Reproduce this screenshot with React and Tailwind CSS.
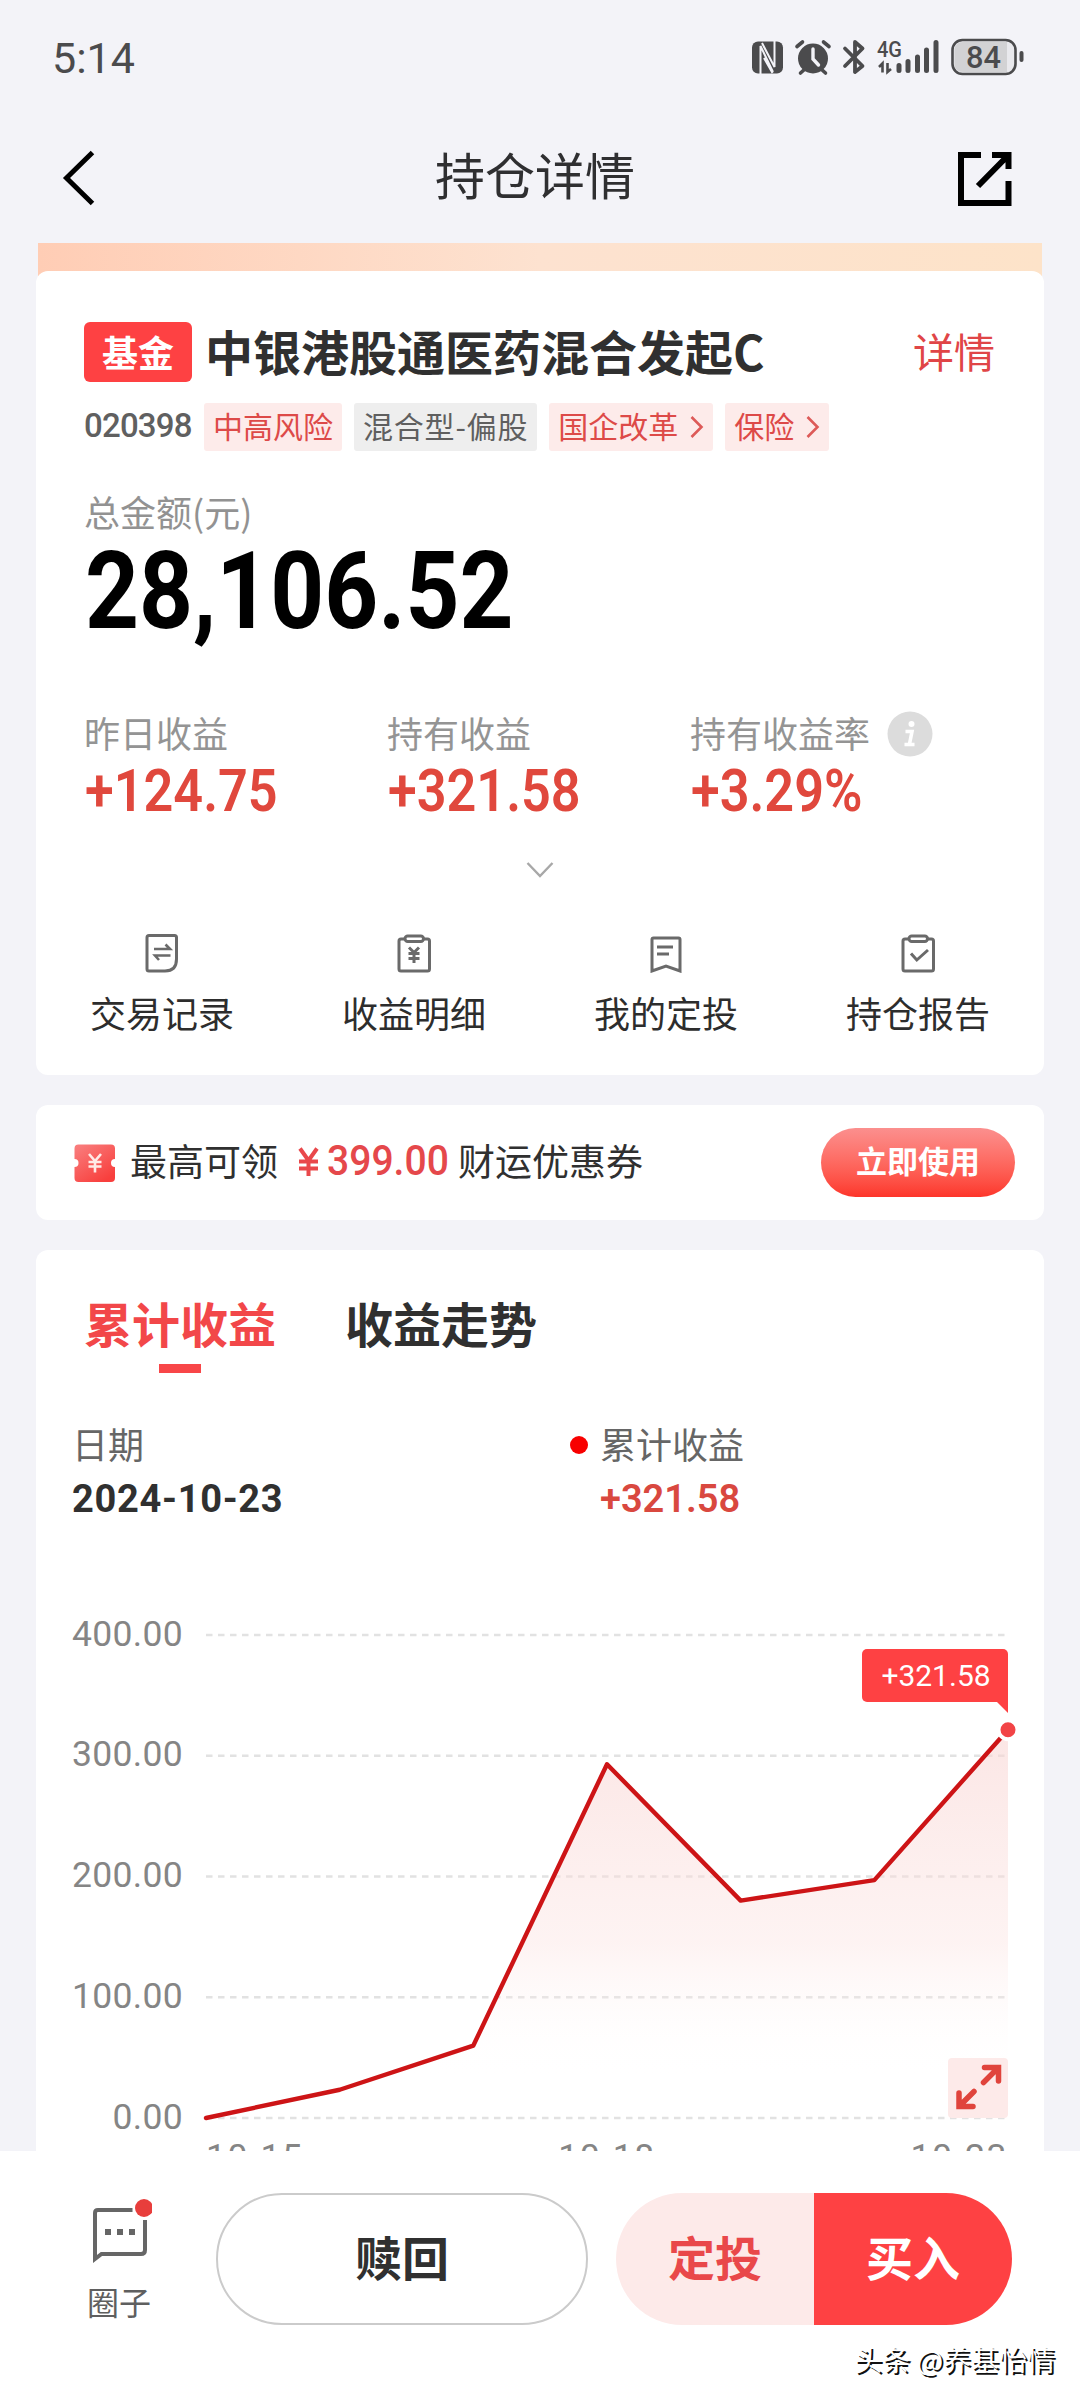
import { clsx } from "clsx";

const tags = [
  { label: "中高风险", tone: "red" },
  { label: "混合型-偏股", tone: "gray", wide: true },
  { label: "国企改革", tone: "red", link: true },
  { label: "保险", tone: "red", link: true },
];

const stats = [
  { label: "昨日收益", value: "+124.75" },
  { label: "持有收益", value: "+321.58" },
  { label: "持有收益率", value: "+3.29%", info: true },
];

const actions = [
  { icon: "record", label: "交易记录" },
  { icon: "income", label: "收益明细" },
  { icon: "plan", label: "我的定投" },
  { icon: "report", label: "持仓报告" },
];

const history = [0, 23.4, 60, 293, 180, 197, 321.58];
const yTicks = ["400.00", "300.00", "200.00", "100.00", "0.00"];

function StatusBar() {
  return (
    <div className="flex h-[112px] items-center justify-between pl-[52px] pr-[54px] pt-1 text-[#4b4b4d]">
      <span className="font-[Roboto] text-[43px] leading-none">5:14</span>
      <svg width="274" height="40" viewBox="0 0 274 40" fill="none" stroke="currentColor">
        {/* nfc */}
        <rect x="0" y="3.500" width="31" height="32" rx="6" fill="currentColor" stroke="none" />
        <path d="M8.500 36V8L21 34M22.500 3V29L10 5M12 20L20.500 35" stroke="#f3f3f8" strokeWidth="2" />
        {/* alarm */}
        <circle cx="61" cy="20.500" r="15" fill="currentColor" stroke="none" />
        <path d="M45 8.500L50.500 4M77 8.500L71.500 4M48.500 35L53.500 30.500M73.500 35L68.500 30.500" strokeWidth="3.600" strokeLinecap="round" />
        <path d="M61 11V21L66.500 27" stroke="#f3f3f8" strokeWidth="3.400" strokeLinecap="round" />
        {/* bluetooth */}
        <path d="M93 10.500L110.500 28L103 34V4L110.500 10.500L93 28" strokeWidth="3.800" strokeLinecap="round" strokeLinejoin="round" />
        {/* signal */}
        <path d="M130.500 34.500V25.500L127 29M135.500 25V34L139 31" strokeWidth="2.600" />
        <path d="M147 27.500V32.500M156 23.500V32.500M165.500 19V32.500M174.500 12V32.500M184 4.500V32.500" strokeWidth="5" strokeLinecap="round" />
        <text x="125" y="18.500" fill="currentColor" stroke="none" fontFamily="Roboto" fontSize="22" fontWeight="500" textLength="25" lengthAdjust="spacingAndGlyphs">4G</text>
        {/* battery */}
        <rect x="200.500" y="2" width="63" height="34" rx="10" fill="#e9e9ed" strokeWidth="2.600" />
        <path d="M211 4H255V34H211C206 34 202.500 31 202.500 26V12C202.500 7 206 4 211 4Z" fill="#d2d2d4" stroke="none" />
        <text x="214" y="30" fill="currentColor" stroke="none" fontFamily="Roboto" fontSize="31" fontWeight="500" textLength="35" lengthAdjust="spacingAndGlyphs">84</text>
        <path d="M269.500 15V22" strokeWidth="4" strokeLinecap="round" />
      </svg>
    </div>
  );
}

function NavBar() {
  return (
    <div className="flex h-[131px] items-center justify-between pl-[60px] pr-[67px]">
      <svg width="38" height="56" viewBox="0 0 38 56" fill="none" stroke="#000" strokeWidth="5">
        <path d="M32.500 2.500L6.500 28L32.500 53.500" />
      </svg>
      <h1 className="ml-[15px] pb-[10px] text-[50px] leading-none text-[#2f2f31]">持仓详情</h1>
      <svg width="56" height="58" viewBox="0 0 56 58" fill="none" stroke="#000" strokeWidth="6">
        <path d="M24 6H4V54H51.500V32" />
        <path d="M35 6H51.500V20M51.500 6L21 37" />
      </svg>
    </div>
  );
}

function Chevron() {
  return (
    <svg width="14" height="24" viewBox="0 0 14 24" fill="none" stroke="#dd5a58" strokeWidth="2.600" className="ml-[12px] mt-[3px]">
      <path d="M1.500 2L11.500 12L1.500 22" />
    </svg>
  );
}

function ActionIcon({ name }) {
  return (
    <svg width="36" height="40" viewBox="0 0 36 40" fill="none" stroke="#6a6a6a" strokeWidth="3">
      {name === "record" && (
        <>
          <path d="M5 2.500H30.500Q32.500 2.500 32.500 4.500V26Q32.500 38 21 38H5Q3 38 3 36V4.500Q3 2.500 5 2.500Z" />
          <path d="M10 16H26L21.500 11.500M26.500 22.500H11L15 27" strokeWidth="2.600" />
        </>
      )}
      {(name === "income" || name === "report") && (
        <>
          <path d="M9 6H5Q3 6 3 8V36Q3 38 5 38H31.500Q33.500 38 33.500 36V8Q33.500 6 31.500 6H27.500" />
          <rect x="9" y="3" width="18.500" height="5.500" rx="2.700" />
        </>
      )}
      {name === "income" && <path d="M13 14.500L18 19.500L23 14.500M12.500 20.500H23.500M12.500 25.500H23.500M18 19.500V30" />}
      {name === "report" && <path d="M11 20.500L16.800 27L28 17" />}
      {name === "plan" && (
        <>
          <path d="M5.500 5H30.500Q32 5 32 6.500V38L18 33L4 38V6.500Q4 5 5.500 5Z" />
          <path d="M9 14H25M9 21H21" />
        </>
      )}
    </svg>
  );
}

function FundCard() {
  return (
    <section className="mt-[28px] h-[804px] rounded-xl bg-white pt-[51px]">
      <div className="flex h-[60px] items-center pl-12 pr-[49px]">
        <span className="flex h-[60px] w-[108px] items-center justify-center rounded-md bg-[#fe4143] pb-[3px] text-[36px] leading-none font-bold text-white">基金</span>
        <h2 className="ml-[13px] pb-[5px] text-[48px] leading-none font-bold whitespace-nowrap text-[#303030]">中银港股通医药混合发起C</h2>
        <a className="ml-auto pb-[4px] text-[41px] leading-none text-[#e04547]">详情</a>
      </div>

      <div className="mt-[21px] flex h-12 items-center gap-3 pl-12 text-[30px] leading-none">
        <span className="w-[108px] pb-[4px] font-[Roboto] text-[33px] font-medium tracking-[-0.8px] text-[#606060]">020398</span>
        {tags.map((tag) => (
          <span
            key={tag.label}
            className={clsx(
              "flex h-12 items-center rounded-[3px] px-[9px] pb-[4px] whitespace-nowrap",
              tag.tone === "red" ? "bg-[#fdebea] text-[#dd4a48]" : "bg-[#eeeeee] text-[#5f5f5f]",
              tag.wide && "tracking-[0.8px]"
            )}
          >
            {tag.label}
            {tag.link && <Chevron />}
          </span>
        ))}
      </div>

      <div className="mt-[42px] pl-12 text-[36px] leading-9 text-[#929292]">总金额(元)</div>
      <div className="ml-[49px] mt-[9px] h-[108px] origin-left scale-x-[0.88] font-[Roboto] text-[107px] leading-[108px] font-bold whitespace-nowrap text-black">
        28,106.52
      </div>

      <div className="mt-[65px] grid grid-cols-[303px_303px_1fr] pl-12">
        {stats.map((s) => (
          <div key={s.label}>
            <div className="flex h-[46px] items-center text-[36px] leading-none text-[#949494]">
              <span className="pb-[5px]">{s.label}</span>
              {s.info && (
                <svg width="46" height="46" viewBox="0 0 46 46" className="ml-[17px]">
                  <circle cx="23" cy="23" r="22.500" fill="#dcdcdc" />
                  <circle cx="24.500" cy="13" r="3" fill="#fff" />
                  <path d="M18.500 20.500H25L22.500 33M17.500 33.500H27.500" fill="none" stroke="#fff" strokeWidth="3.600" />
                </svg>
              )}
            </div>
            <div className="ml-px mt-[4px] h-[60px] origin-left scale-x-[0.87] font-[Roboto] text-[60px] leading-[60px] font-semibold whitespace-nowrap text-[#e0483d]">
              {s.value}
            </div>
          </div>
        ))}
      </div>

      <svg width="28" height="18" viewBox="0 0 28 18" fill="none" stroke="#a8a8a8" strokeWidth="2.400" className="mx-auto mt-[40px]">
        <path d="M1.500 2L14 15L26.500 2" />
      </svg>

      <div className="mt-[54px] grid grid-cols-4">
        {actions.map((a) => (
          <div key={a.label} className="flex flex-col items-center gap-[19px]">
            <ActionIcon name={a.icon} />
            <span className="text-[36px] leading-10 text-[#2d2d2d]">{a.label}</span>
          </div>
        ))}
      </div>
    </section>
  );
}

function CouponCard() {
  return (
    <section className="mt-[30px] flex h-[115px] items-center rounded-xl bg-white pl-[38px] pr-[29px] text-[37px] leading-none text-[#303030]">
      <svg width="42" height="38" viewBox="0 0 42 38">
        <defs>
          <linearGradient id="ticket" x1="0" y1="0" x2="0.7" y2="1">
            <stop offset="0" stopColor="#f98080" />
            <stop offset="1" stopColor="#f83f3d" />
          </linearGradient>
        </defs>
        <path d="M4.500 0.500H37Q41 0.500 41 4.500V15A4 4 0 0 0 41 23V34Q41 38 37 38H4.500Q0.500 38 0.500 34V23A4 4 0 0 0 0.500 15V4.500Q0.500 0.500 4.500 0.500Z" fill="url(#ticket)" />
        <path d="M15 10L21 17L27 10M14.500 18H27.500M14.500 22.500H27.500M21 17V28.500" fill="none" stroke="#ffe9e6" strokeWidth="2.600" />
      </svg>
      <span className="ml-[14px] pb-[5px]">最高可领</span>
      <svg width="21" height="30" viewBox="0 0 21 30" fill="none" stroke="#e9484b" strokeWidth="4" className="mb-[2px] ml-[20px]">
        <path d="M2 1.500L10.500 13.500L19 1.500M1 14.500H20M1 21.500H20M10.500 13.500V29" />
      </svg>
      <span className="ml-[8px] w-[122px] origin-left scale-x-[0.93] pb-[3px] font-[Roboto] text-[42px] font-medium text-[#e5484b]">399.00</span>
      <span className="ml-[9px] pb-[5px]">财运优惠券</span>
      <button className="ml-auto h-[69px] w-[194px] rounded-full bg-linear-to-b from-[#fb8f8e] to-[#fd3429] pb-[6px] text-[31px] leading-none font-bold text-white">
        立即使用
      </button>
    </section>
  );
}

function ProfitChart() {
  const step = 802 / 6;
  const pts = history.map((v, i) => [12 + i * step, 500 - v * 1.2075]);
  const line = pts.map((p) => p.join(",")).join(" ");

  return (
    <div className="relative mt-[99px] flex h-[540px] items-start pl-[25px] font-[Roboto] text-[35.5px] leading-none text-[#858585]">
      <div className="-mt-[44px] flex w-[133px] flex-col items-end pr-[11px] tracking-[0.3px]">
        {yTicks.map((t) => (
          <span key={t} className="flex h-[120.75px] shrink-0 items-center">{t}</span>
        ))}
      </div>
      <svg width="836" height="540" viewBox="0 0 836 540">
        <defs>
          <linearGradient id="area" x1="0" y1="112" x2="0" y2="500" gradientUnits="userSpaceOnUse">
            <stop offset="0" stopColor="#f9d5d3" stopOpacity="0.6" />
            <stop offset="0.55" stopColor="#fbe0de" stopOpacity="0.38" />
            <stop offset="0.9" stopColor="#fff" stopOpacity="0" />
          </linearGradient>
        </defs>
        {yTicks.map((t, i) => (
          <path key={t} d={`M12 ${17 + i * 120.75}H814`} stroke="#e2e2e2" strokeWidth="2.500" strokeDasharray="6.500 5.500" />
        ))}
        <polygon points={`12,500 ${line} 814,500`} fill="url(#area)" />
        <polyline points={line} fill="none" stroke="#cd1416" strokeWidth="4.400" strokeLinejoin="round" strokeLinecap="round" />
        <circle cx="814" cy="111.700" r="9.500" fill="#f24446" stroke="#fff" strokeWidth="4" />
      </svg>
      <div className="absolute right-[36px] top-[31px] flex h-[53px] w-[146px] items-center justify-center rounded-[5px] rounded-br-none bg-[#fe4143] pl-[2px] text-[30px] text-white">
        +321.58
        <svg width="12" height="12" viewBox="0 0 12 12" className="absolute right-0 top-[52px]">
          <path d="M0 0H12V12Z" fill="#fe4143" />
        </svg>
      </div>
      <div className="absolute right-[36px] top-[440px] h-[60px] w-[60px] rounded-[4px] bg-[#fdeae9]">
        <svg width="60" height="60" viewBox="0 0 60 60" fill="none" stroke="#e0443c" strokeWidth="5.500" strokeLinecap="round">
          <path d="M36.500 9.500H50.500V23M50 10L35.500 24.500M25 48.500H11V35M11.500 48L26 33.500" />
        </svg>
      </div>
      <div className="absolute right-[36px] top-[522px] flex w-[802px] justify-between tracking-[1.6px]">
        <span>10-15</span>
        <span>10-18</span>
        <span>10-23</span>
      </div>
    </div>
  );
}

function ProfitCard() {
  return (
    <section className="mt-[30px] h-[901px] overflow-hidden rounded-t-xl bg-white pt-[48px]">
      <div className="flex gap-[69px] pl-12 text-[48px] leading-[48px] font-bold">
        <span className="relative text-[#f24749]">
          累计收益
          <i className="absolute left-[75px] top-[66px] h-[9px] w-[42px] bg-[#f84648]" />
        </span>
        <span className="text-[#303030]">收益走势</span>
      </div>
      <div className="mt-[77px] grid grid-cols-[528px_1fr] pl-[36px]">
        <div>
          <div className="text-[36px] leading-10 text-[#666]">日期</div>
          <div className="mt-[16px] font-[Roboto] text-[38px] leading-10 font-bold tracking-[0.7px] text-[#303030]">2024-10-23</div>
        </div>
        <div className="relative">
          <i className="absolute -left-[30px] top-[13px] size-[18px] rounded-full bg-[#f80000]" />
          <div className="text-[36px] leading-10 text-[#666]">累计收益</div>
          <div className="mt-[16px] font-[Roboto] text-[38px] leading-10 font-semibold text-[#d9483f]">+321.58</div>
        </div>
      </div>
      <ProfitChart />
    </section>
  );
}

function BottomBar() {
  return (
    <footer className="relative flex h-[249px] items-start bg-white pt-[42px]">
      <div className="ml-[86px] flex w-[66px] flex-col items-center pt-[6px]">
        <svg width="66" height="66" viewBox="0 0 66 66" fill="none" stroke="#666" strokeWidth="4">
          <path d="M46.500 11H12Q9 11 9 14V60L15.500 55H55Q59 55 59 51V21" />
          <path d="M19 33H25M31 33H37M43 33H49" strokeWidth="6" />
          <circle cx="58" cy="9" r="9" fill="#e83e3c" stroke="none" />
        </svg>
        <span className="mt-[19px] text-[32px] leading-[34px] text-[#5f5f5f]">圈子</span>
      </div>
      <button className="ml-[64px] h-[132px] w-[372px] rounded-full border-2 border-[#cbcbcb] pb-[7px] text-[47px] leading-none font-bold text-[#303030]">赎回</button>
      <div className="ml-[28px] flex h-[132px] w-[396px] overflow-hidden rounded-full text-[47px] leading-none font-bold">
        <button className="w-[198px] bg-[#fdeae9] pb-[7px] text-[#e9484a]">定投</button>
        <button className="flex-1 bg-[#fe4143] pb-[7px] text-white">买入</button>
      </div>
      <span className="absolute right-[25px] top-[190px] text-[28px] leading-9 whitespace-nowrap text-white [text-shadow:2px_2px_0_#111]">头条 @养基怡情</span>
    </footer>
  );
}

export default function App() {
  return (
    <div className="h-[2400px] w-[1080px] overflow-hidden bg-[#f3f3f8] font-['Noto_Sans_CJK_SC',sans-serif]">
      <StatusBar />
      <NavBar />
      <main className="relative px-9">
        <div className="absolute left-[38px] top-0 h-[44px] w-[1004px] bg-linear-to-r from-[#ffcdb5] via-[#fde2d0] to-[#fde3c9]" />
        <div className="relative flex flex-col">
          <FundCard />
          <CouponCard />
          <ProfitCard />
        </div>
      </main>
      <BottomBar />
    </div>
  );
}
